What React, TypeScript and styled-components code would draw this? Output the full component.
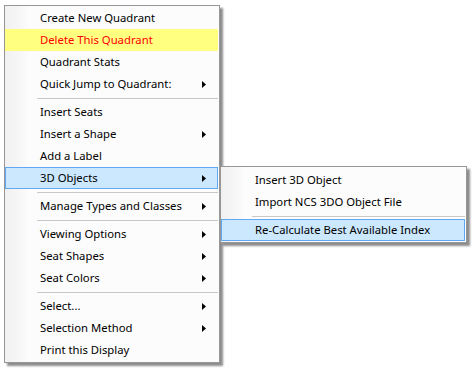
import styled, { createGlobalStyle } from 'styled-components'

const GlobalStyle = createGlobalStyle`
  html, body {
    margin: 0;
    padding: 0;
    background: #ffffff;
  }
  body {
    font-family: 'Segoe UI', 'Noto Sans', 'DejaVu Sans', sans-serif;
  }
`

const Page = styled.div`
  position: relative;
  width: 475px;
  height: 371px;
  padding: 5px 0 0 4px;
  box-sizing: border-box;
`

const Menu = styled.div<{ $width: number }>`
  position: relative;
  width: ${({ $width }) => $width}px;
  box-sizing: border-box;
  border: 1px solid #979797;
  background: linear-gradient(to right, #f1f1f1 0px, #f6f6f6 14px, #fcfcfc 24px, #fcfcfc 100%);
  box-shadow: 3px 3px 2px rgba(0, 0, 0, 0.45);
  padding: 1px 0 1px 0;
`

const SubMenu = styled(Menu)`
  position: absolute;
  left: 220px;
  top: 166px;
  padding: 2px 0 1px 0;
`

const Item = styled.div<{ $tone?: 'warn' | 'active'; $indent: number }>`
  display: flex;
  align-items: center;
  height: 22px;
  box-sizing: border-box;
  margin: 0 1px 0 0;
  padding: 0 11px 0 ${({ $indent }) => $indent}px;
  font-size: 11.3px;
  color: ${({ $tone }) => ($tone === 'warn' ? '#ff0000' : '#000000')};
  background: ${({ $tone }) =>
    $tone === 'warn' ? '#ffff80' : $tone === 'active' ? '#cce8ff' : 'transparent'};
  border: 1px solid ${({ $tone }) => ($tone === 'active' ? '#5ea9f2' : 'transparent')};
  white-space: nowrap;
`

const Label = styled.span`
  flex: 1;
  padding-bottom: 1px;
`

const Arrow = styled.svg`
  width: 4px;
  height: 7px;
  display: block;
`

const Separator = styled.div<{ $left: number }>`
  height: 6px;
  display: flex;
  align-items: center;
  padding: 0 1px 0 ${({ $left }) => $left}px;

  &::after {
    content: '';
    flex: 1;
    height: 1px;
    background: #c8c8c8;
  }
`

type Entry =
  | { label: string; sub?: boolean; tone?: 'warn' | 'active' }
  | 'sep'

const mainItems: Entry[] = [
  { label: 'Create New Quadrant' },
  { label: 'Delete This Quadrant', tone: 'warn' },
  { label: 'Quadrant Stats' },
  { label: 'Quick Jump to Quadrant:', sub: true },
  'sep',
  { label: 'Insert Seats' },
  { label: 'Insert a Shape', sub: true },
  { label: 'Add a Label' },
  { label: '3D Objects', sub: true, tone: 'active' },
  'sep',
  { label: 'Manage Types and Classes', sub: true },
  'sep',
  { label: 'Viewing Options', sub: true },
  { label: 'Seat Shapes', sub: true },
  { label: 'Seat Colors', sub: true },
  'sep',
  { label: 'Select...', sub: true },
  { label: 'Selection Method', sub: true },
  { label: 'Print this Display' },
]

const subItems: Entry[] = [
  { label: 'Insert 3D Object' },
  { label: 'Import NCS 3DO Object File' },
  'sep',
  { label: 'Re-Calculate Best Available Index', tone: 'active' },
]

function MenuList({ items, indent, sepLeft }: { items: Entry[]; indent: number; sepLeft: number }) {
  return (
    <>
      {items.map((it, i) =>
        it === 'sep' ? (
          <Separator key={i} $left={sepLeft} />
        ) : (
          <Item key={i} $tone={it.tone} $indent={indent}>
            <Label>{it.label}</Label>
            {it.sub && (
              <Arrow viewBox="0 0 4 7">
                <polygon points="0,0 4,3.5 0,7" fill="#000" />
              </Arrow>
            )}
          </Item>
        )
      )}
    </>
  )
}

export default function App() {
  return (
    <Page>
      <GlobalStyle />
      <Menu $width={216}>
        <MenuList items={mainItems} indent={34} sepLeft={32} />
      </Menu>
      <SubMenu $width={247}>
        <MenuList items={subItems} indent={33} sepLeft={31} />
      </SubMenu>
    </Page>
  )
}
